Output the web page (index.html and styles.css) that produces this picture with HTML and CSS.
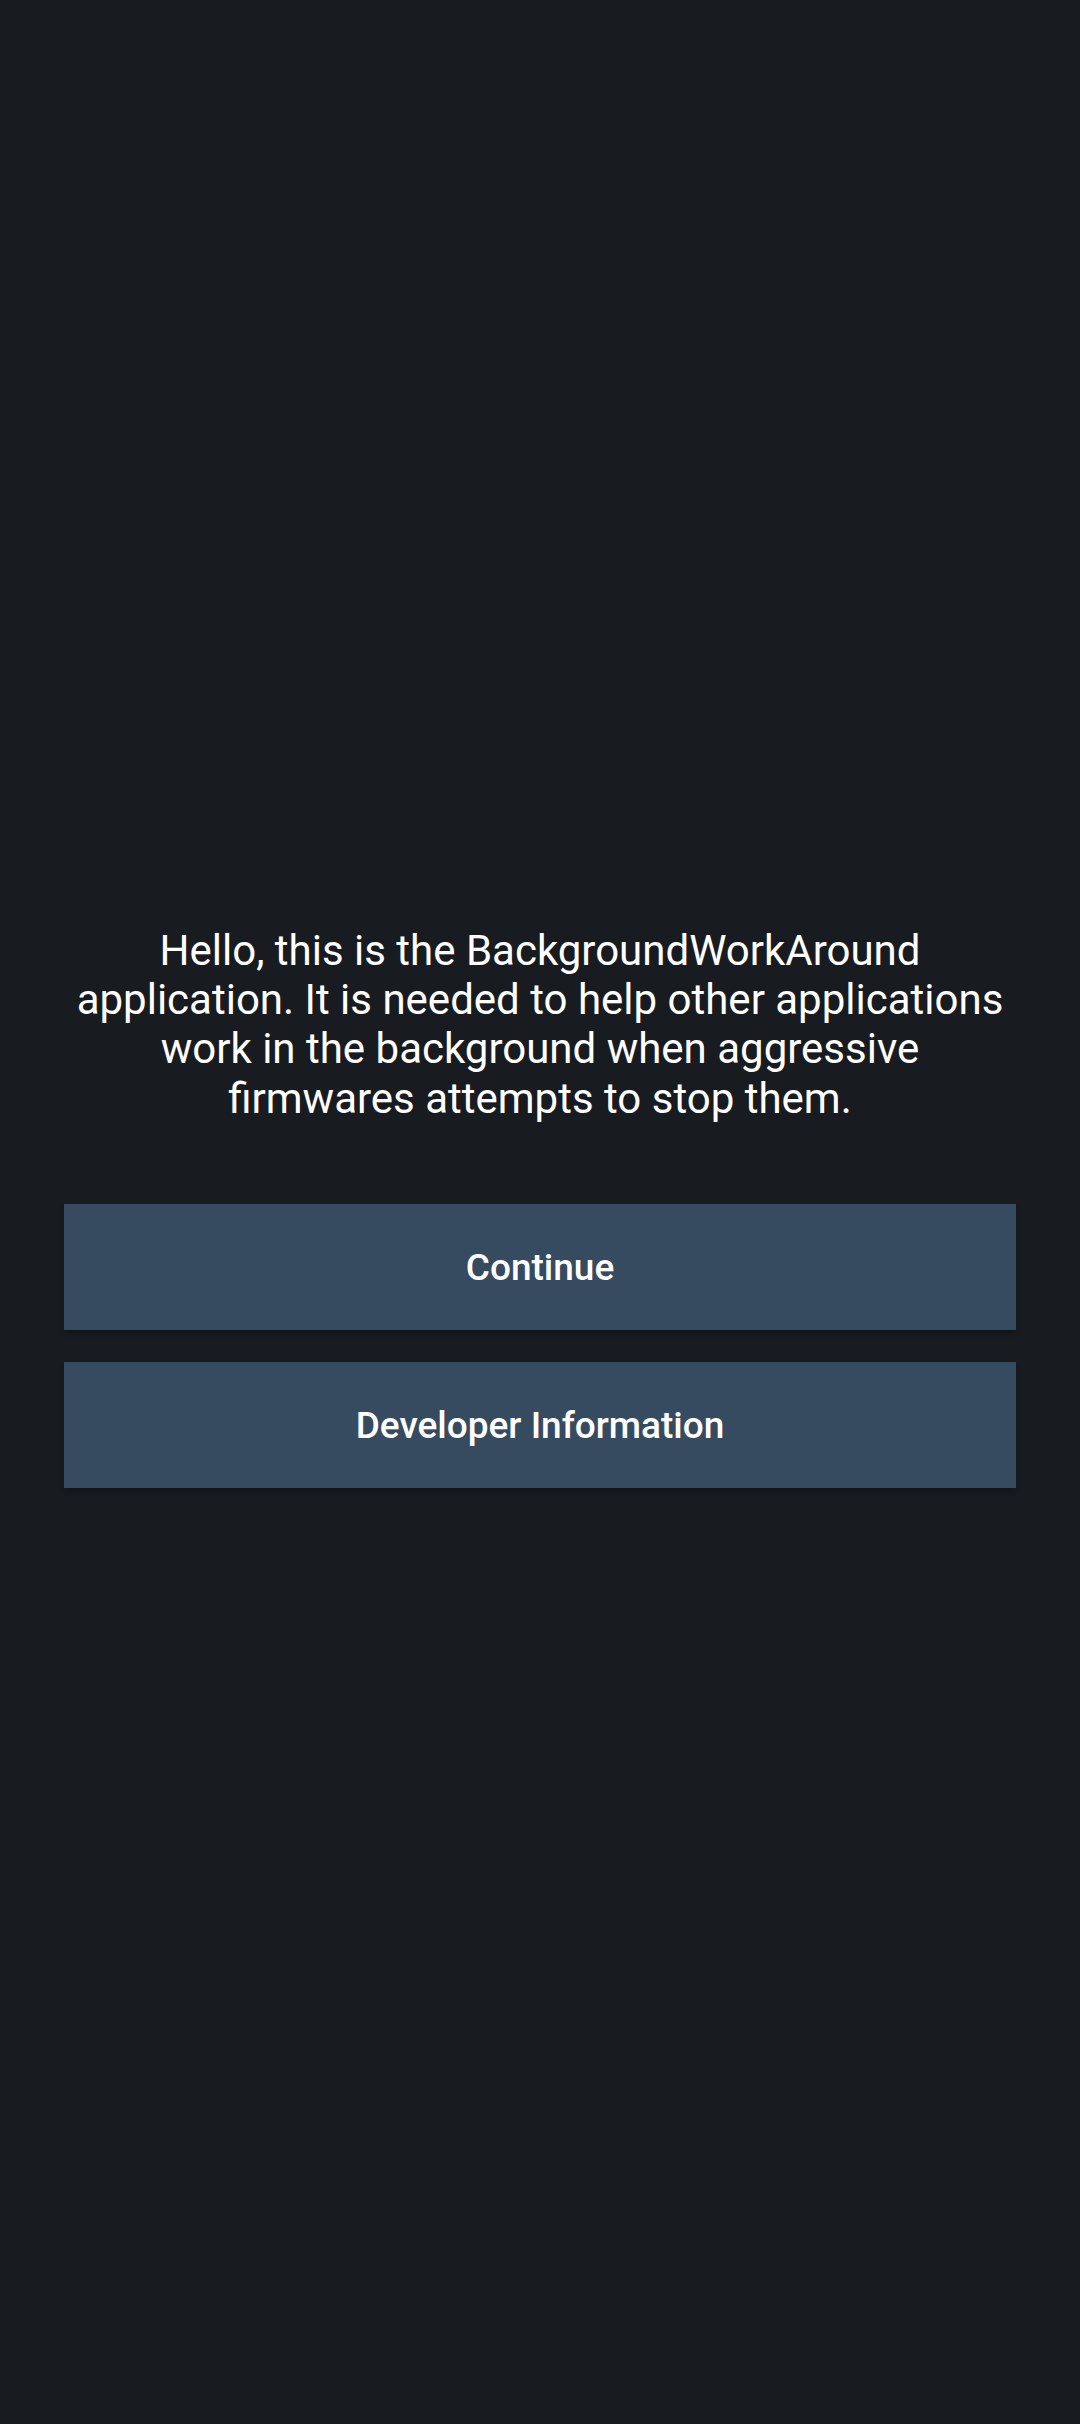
FILE: index.html
```html
<!DOCTYPE html>
<html lang="en">
<head>
<meta charset="utf-8">
<link rel="stylesheet" href="styles.css">
</head>
<body>
<main class="screen">
  <p class="intro">Hello, this is the BackgroundWorkAround application. It is needed to help other applications work in the background when aggressive firmwares attempts to stop them.</p>
  <div class="actions">
    <button class="btn">Continue</button>
    <button class="btn">Developer Information</button>
  </div>
</main>
</body>
</html>
```

FILE: styles.css
```css
html, body {
  margin: 0;
  padding: 0;
  background: #181b20;
}
.screen {
  width: 1080px;
  height: 2424px;
  box-sizing: border-box;
  padding: 926px 64px 0;
  display: flex;
  flex-direction: column;
  font-family: Roboto, "Noto Sans", sans-serif;
  color: #ffffff;
}
.intro {
  margin: 0;
  font-size: 42px;
  line-height: 49.2px;
  text-align: center;
  font-weight: 400;
}
.actions {
  margin-top: 81px;
  display: flex;
  flex-direction: column;
  gap: 32px;
}
.btn {
  height: 126px;
  border: none;
  border-radius: 0;
  background: #364b60;
  color: #ffffff;
  font-family: Roboto, "Noto Sans", sans-serif;
  font-size: 37px;
  font-weight: 500;
  box-shadow: 0 4px 5px rgba(0, 0, 0, 0.22);
  padding: 2px 0 0;
}
```
